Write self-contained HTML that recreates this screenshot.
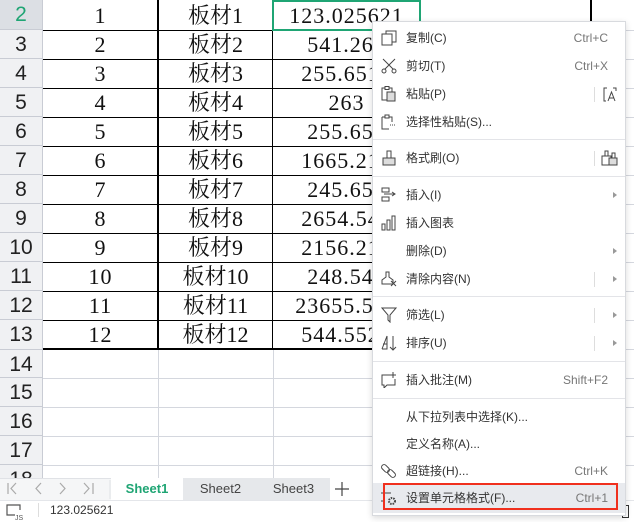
<!DOCTYPE html>
<html><head><meta charset="utf-8"><style>
*{margin:0;padding:0;box-sizing:border-box}
body{width:634px;height:522px;overflow:hidden;background:#fff;position:relative;font-family:"Liberation Sans","Noto Sans CJK SC",sans-serif}
.a{position:absolute}
.rh{position:absolute;left:0;width:43px;background:#f0f1f3;border-bottom:1px solid #c9ccd4;border-right:1px solid #c9ccd4;font-size:21px;color:#222;text-align:center;line-height:29px}
.gl{position:absolute;background:#d4d7de}
.c{position:absolute;height:29px;line-height:30px;text-align:center;font-family:"Liberation Serif","Noto Serif CJK SC",serif;font-size:22px;color:#111;white-space:nowrap;overflow:hidden}
.num{letter-spacing:1px}
.menu{position:absolute;left:372px;top:21px;width:254px;height:495px;background:#fff;border:1px solid #d8dade;box-shadow:0 2px 6px rgba(0,0,0,.15)}
.it{position:absolute;left:0;width:252px;height:28px;font-size:12px;color:#333;line-height:28px}
.it .t{position:absolute;left:33px}
.it .k{position:absolute;right:17px;color:#777}
.it .ar{position:absolute;right:8px;top:11px;width:0;height:0;border-left:4px solid #999;border-top:3px solid transparent;border-bottom:3px solid transparent}
.it .vs{position:absolute;left:221px;top:7px;width:1px;height:15px;background:#ddd}
.it svg{position:absolute;left:8px;top:6px}
.sep{position:absolute;left:0;width:252px;height:1px;background:#e3e4e8}
</style></head><body>

<div class="gl" style="left:158px;top:349px;width:1px;height:130px"></div>
<div class="gl" style="left:273px;top:349px;width:1px;height:130px"></div>
<div class="gl" style="left:43px;top:378px;width:330px;height:1px"></div>
<div class="gl" style="left:43px;top:407px;width:330px;height:1px"></div>
<div class="gl" style="left:43px;top:436px;width:330px;height:1px"></div>
<div class="gl" style="left:43px;top:465px;width:330px;height:1px"></div>
<div class="gl" style="left:626px;top:30px;width:8px;height:1px"></div>
<div class="gl" style="left:626px;top:59px;width:8px;height:1px"></div>
<div class="gl" style="left:626px;top:88px;width:8px;height:1px"></div>
<div class="gl" style="left:626px;top:117px;width:8px;height:1px"></div>
<div class="gl" style="left:626px;top:146px;width:8px;height:1px"></div>
<div class="gl" style="left:626px;top:175px;width:8px;height:1px"></div>
<div class="gl" style="left:626px;top:204px;width:8px;height:1px"></div>
<div class="gl" style="left:626px;top:233px;width:8px;height:1px"></div>
<div class="gl" style="left:626px;top:262px;width:8px;height:1px"></div>
<div class="gl" style="left:626px;top:291px;width:8px;height:1px"></div>
<div class="gl" style="left:626px;top:320px;width:8px;height:1px"></div>
<div class="gl" style="left:626px;top:349px;width:8px;height:1px"></div>
<div class="gl" style="left:626px;top:378px;width:8px;height:1px"></div>
<div class="gl" style="left:626px;top:407px;width:8px;height:1px"></div>
<div class="gl" style="left:626px;top:436px;width:8px;height:1px"></div>
<div class="gl" style="left:626px;top:465px;width:8px;height:1px"></div>
<div class="gl" style="left:420px;top:0;width:1px;height:21px"></div>
<div class="a" style="left:590px;top:0;width:2px;height:21px;background:#000"></div>

<div class="a" style="left:43px;top:0;width:380px;height:350px;border-bottom:2px solid #000"></div>
<div class="a" style="left:157px;top:0;width:2px;height:350px;background:#000"></div>
<div class="a" style="left:272px;top:0;width:1px;height:350px;background:#000"></div>

<div class="rh" style="top:0;height:30px;background:#dcdfe4;color:#1fa574">2</div>
<div class="rh" style="top:30px;height:29px">3</div>
<div class="rh" style="top:59px;height:29px">4</div>
<div class="rh" style="top:88px;height:29px">5</div>
<div class="rh" style="top:117px;height:29px">6</div>
<div class="rh" style="top:146px;height:29px">7</div>
<div class="rh" style="top:175px;height:29px">8</div>
<div class="rh" style="top:204px;height:29px">9</div>
<div class="rh" style="top:233px;height:29px">10</div>
<div class="rh" style="top:262px;height:29px">11</div>
<div class="rh" style="top:291px;height:29px">12</div>
<div class="rh" style="top:320px;height:30px">13</div>
<div class="rh" style="top:350px;height:28px">14</div>
<div class="rh" style="top:378px;height:29px">15</div>
<div class="rh" style="top:407px;height:29px">16</div>
<div class="rh" style="top:436px;height:29px">17</div>
<div class="rh" style="top:465px;height:29px">18</div>

<div class="a" style="left:43px;top:30px;width:330px;height:1px;background:#000"></div>
<div class="a" style="left:43px;top:59px;width:330px;height:1px;background:#000"></div>
<div class="a" style="left:43px;top:88px;width:330px;height:1px;background:#000"></div>
<div class="a" style="left:43px;top:117px;width:330px;height:1px;background:#000"></div>
<div class="a" style="left:43px;top:146px;width:330px;height:1px;background:#000"></div>
<div class="a" style="left:43px;top:175px;width:330px;height:1px;background:#000"></div>
<div class="a" style="left:43px;top:204px;width:330px;height:1px;background:#000"></div>
<div class="a" style="left:43px;top:233px;width:330px;height:1px;background:#000"></div>
<div class="a" style="left:43px;top:262px;width:330px;height:1px;background:#000"></div>
<div class="a" style="left:43px;top:291px;width:330px;height:1px;background:#000"></div>
<div class="a" style="left:43px;top:320px;width:330px;height:1px;background:#000"></div>

<div class="c num" style="left:43px;top:1px;width:115px">1</div><div class="c" style="left:158px;top:1px;width:115px">板材1</div><div class="c num" style="left:273px;top:1px;width:147px">123.025621</div>
<div class="c num" style="left:43px;top:30px;width:115px">2</div><div class="c" style="left:158px;top:30px;width:115px">板材2</div><div class="c num" style="left:273px;top:30px;width:147px">541.265</div>
<div class="c num" style="left:43px;top:59px;width:115px">3</div><div class="c" style="left:158px;top:59px;width:115px">板材3</div><div class="c num" style="left:273px;top:59px;width:147px">255.6512</div>
<div class="c num" style="left:43px;top:88px;width:115px">4</div><div class="c" style="left:158px;top:88px;width:115px">板材4</div><div class="c num" style="left:273px;top:88px;width:147px">263</div>
<div class="c num" style="left:43px;top:117px;width:115px">5</div><div class="c" style="left:158px;top:117px;width:115px">板材5</div><div class="c num" style="left:273px;top:117px;width:147px">255.651</div>
<div class="c num" style="left:43px;top:146px;width:115px">6</div><div class="c" style="left:158px;top:146px;width:115px">板材6</div><div class="c num" style="left:273px;top:146px;width:147px">1665.215</div>
<div class="c num" style="left:43px;top:175px;width:115px">7</div><div class="c" style="left:158px;top:175px;width:115px">板材7</div><div class="c num" style="left:273px;top:175px;width:147px">245.654</div>
<div class="c num" style="left:43px;top:204px;width:115px">8</div><div class="c" style="left:158px;top:204px;width:115px">板材8</div><div class="c num" style="left:273px;top:204px;width:147px">2654.541</div>
<div class="c num" style="left:43px;top:233px;width:115px">9</div><div class="c" style="left:158px;top:233px;width:115px">板材9</div><div class="c num" style="left:273px;top:233px;width:147px">2156.214</div>
<div class="c num" style="left:43px;top:262px;width:115px">10</div><div class="c" style="left:158px;top:262px;width:115px">板材10</div><div class="c num" style="left:273px;top:262px;width:147px">248.541</div>
<div class="c num" style="left:43px;top:291px;width:115px">11</div><div class="c" style="left:158px;top:291px;width:115px">板材11</div><div class="c num" style="left:273px;top:291px;width:147px">23655.541</div>
<div class="c num" style="left:43px;top:320px;width:115px">12</div><div class="c" style="left:158px;top:320px;width:115px">板材12</div><div class="c num" style="left:273px;top:320px;width:147px">544.5521</div>

<div class="a" style="left:272px;top:0;width:149px;height:31px;border:2px solid #1fa574"></div>

<!-- tab bar -->
<div class="a" style="left:0;top:478px;width:372px;height:22px;background:#f5f6f7;border-top:1px solid #e0e2e6"></div>
<svg class="a" style="left:0;top:478px" width="111" height="22"><g stroke="#aaa" fill="none" stroke-width="1.2"><path d="M8 5V16M16 5L11 10.5L16 16"/><path d="M41 5L36 10.5L41 16"/><path d="M60 5L65 10.5L60 16"/><path d="M84 5L89 10.5L84 16M93 5V16"/></g><path d="M110 2V21" stroke="#e0e2e6"/></svg>
<div class="a" style="left:111px;top:478px;width:72px;height:22px;background:#fff;color:#1fa574;font-weight:bold;font-size:13px;text-align:center;line-height:22px">Sheet1</div>
<div class="a" style="left:183px;top:478px;width:147px;height:22px;background:#e6e8eb"></div>
<div class="a" style="left:183px;top:478px;width:75px;font-size:13px;color:#444;text-align:center;line-height:22px">Sheet2</div>
<div class="a" style="left:256px;top:478px;width:75px;font-size:13px;color:#444;text-align:center;line-height:22px">Sheet3</div>
<div class="a" style="left:330px;top:478px;width:42px;height:22px;background:#fff"></div>
<svg class="a" style="left:334px;top:481px" width="16" height="16"><path d="M8 1V15M1 8H15" stroke="#444" stroke-width="1.2"/></svg>
<!-- status -->
<div class="a" style="left:0;top:500px;width:634px;height:22px;background:#fff;border-top:1px solid #e4e6ea"></div>
<svg class="a" style="left:6px;top:504px" width="18" height="16"><path d="M9 11H1V1H14V6" fill="none" stroke="#555" stroke-width="1.2"/><text x="9" y="16" font-size="7" fill="#555" font-family="Liberation Sans">JS</text></svg>
<div class="a" style="left:38px;top:503px;width:1px;height:14px;background:#ddd"></div>
<div class="a" style="left:50px;top:503px;font-size:12px;color:#333">123.025621</div>
<div class="a" style="left:622px;top:505px;width:7px;height:13px;border:1px solid #333"></div>

<!-- context menu -->
<div class="menu">
 <div class="a" style="left:0;top:461px;width:252px;height:30px;background:#e8eaee"></div>
 <div class="it" style="top:2px"><svg width="16" height="16"><rect x="5" y="1" width="10" height="11" fill="#fff" stroke="#444"/><rect x="1" y="4" width="10" height="11" fill="#fff" stroke="#444"/></svg><span class="t">复制(C)</span><span class="k">Ctrl+C</span></div>
 <div class="it" style="top:30px"><svg width="16" height="16"><path d="M2 1L13 12M14 1L3 12" stroke="#444" fill="none"/><circle cx="3" cy="13" r="2" fill="#fff" stroke="#444"/><circle cx="13" cy="13" r="2" fill="#fff" stroke="#444"/></svg><span class="t">剪切(T)</span><span class="k">Ctrl+X</span></div>
 <div class="it" style="top:58px"><svg width="16" height="16"><rect x="1" y="2" width="10" height="12" fill="#fff" stroke="#444"/><rect x="4" y="0.5" width="4" height="3" fill="#fff" stroke="#444"/><rect x="6" y="6" width="8" height="9" fill="#ddd" stroke="#444"/></svg><span class="t">粘贴(P)</span><span class="vs"></span><svg style="left:230px;top:7px" width="14" height="15"><path d="M4 1H1V14H3M10 1H13V4" fill="none" stroke="#444"/><path d="M5 14L8.5 5L12 14M6.2 11H10.8" fill="none" stroke="#444"/></svg></div>
 <div class="it" style="top:86px"><svg width="16" height="16"><path d="M1 3H11V8M1 3V15H8" stroke="#444" fill="none"/><rect x="4" y="1" width="4" height="3" fill="#fff" stroke="#444"/><path d="M9 11H14" stroke="#444" stroke-dasharray="1 1"/></svg><span class="t">选择性粘贴(S)...</span></div>
 <div class="sep" style="top:117px"></div>
 <div class="it" style="top:122px"><svg width="16" height="16"><rect x="6" y="1" width="4" height="7" fill="#fff" stroke="#444"/><rect x="2" y="8" width="12" height="7" fill="#ddd" stroke="#444"/></svg><span class="t">格式刷(O)</span><span class="vs"></span><svg style="left:228px;top:6px" width="17" height="16"><rect x="4" y="1" width="3" height="5" fill="#fff" stroke="#444"/><rect x="11" y="3" width="3" height="5" fill="#fff" stroke="#444"/><rect x="1" y="6" width="9" height="9" fill="#fff" stroke="#444"/><rect x="8" y="8" width="8" height="7" fill="#ddd" stroke="#444"/></svg></div>
 <div class="sep" style="top:154px"></div>
 <div class="it" style="top:159px"><svg width="16" height="16"><rect x="1" y="1" width="7" height="4" fill="none" stroke="#444"/><rect x="1" y="10" width="7" height="4" fill="none" stroke="#444"/><path d="M3 7H14M11 5L14 7L11 9" stroke="#444" fill="none"/></svg><span class="t">插入(I)</span><span class="ar"></span></div>
 <div class="it" style="top:187px"><svg width="16" height="16"><rect x="1" y="9" width="3" height="6" fill="none" stroke="#444"/><rect x="6" y="5" width="3" height="10" fill="none" stroke="#444"/><rect x="11" y="1" width="3" height="14" fill="none" stroke="#444"/></svg><span class="t">插入图表</span></div>
 <div class="it" style="top:215px"><span class="t">删除(D)</span><span class="ar"></span></div>
 <div class="it" style="top:243px"><svg width="16" height="16"><path d="M5 1H8V6L12 9V13H1V9L5 6Z" fill="none" stroke="#444"/><path d="M10 10L15 15M15 10L10 15" stroke="#444"/></svg><span class="t">清除内容(N)</span><span class="vs"></span><span class="ar"></span></div>
 <div class="sep" style="top:274px"></div>
 <div class="it" style="top:279px"><svg width="16" height="16"><path d="M1 1H15L9 8V15L7 13V8Z" fill="none" stroke="#444"/></svg><span class="t">筛选(L)</span><span class="vs"></span><span class="ar"></span></div>
 <div class="it" style="top:307px"><svg width="16" height="16"><path d="M1 14L6 1V14H1M6 9H2M12 1V15M9 12L12 15L15 12" fill="none" stroke="#444"/></svg><span class="t">排序(U)</span><span class="vs"></span><span class="ar"></span></div>
 <div class="sep" style="top:339px"></div>
 <div class="it" style="top:344px"><svg width="16" height="16"><path d="M10 3H1V13H3V16L6 13H14V7M12 0V6M9 3H15" fill="none" stroke="#444"/></svg><span class="t">插入批注(M)</span><span class="k">Shift+F2</span></div>
 <div class="sep" style="top:376px"></div>
 <div class="it" style="top:381px"><span class="t">从下拉列表中选择(K)...</span></div>
 <div class="it" style="top:408px"><span class="t">定义名称(A)...</span></div>
 <div class="it" style="top:435px"><svg width="16" height="16"><rect x="0" y="3" width="9" height="5" rx="2.5" transform="rotate(45 4.5 5.5)" fill="none" stroke="#444"/><rect x="6" y="8" width="9" height="5" rx="2.5" transform="rotate(45 10.5 10.5)" fill="none" stroke="#444"/></svg><span class="t">超链接(H)...</span><span class="k">Ctrl+K</span></div>
 <div class="it" style="top:462px"><svg width="16" height="16"><path d="M3 0V14M0 3H10M0 11H3" stroke="#444" fill="none"/><circle cx="11" cy="11" r="3" fill="none" stroke="#444" stroke-width="2" stroke-dasharray="1.5 1"/></svg><span class="t">设置单元格格式(F)...</span><span class="k">Ctrl+1</span></div>
</div>
<div class="a" style="left:383px;top:483px;width:235px;height:27px;border:2px solid #f0301e"></div>
</body></html>
